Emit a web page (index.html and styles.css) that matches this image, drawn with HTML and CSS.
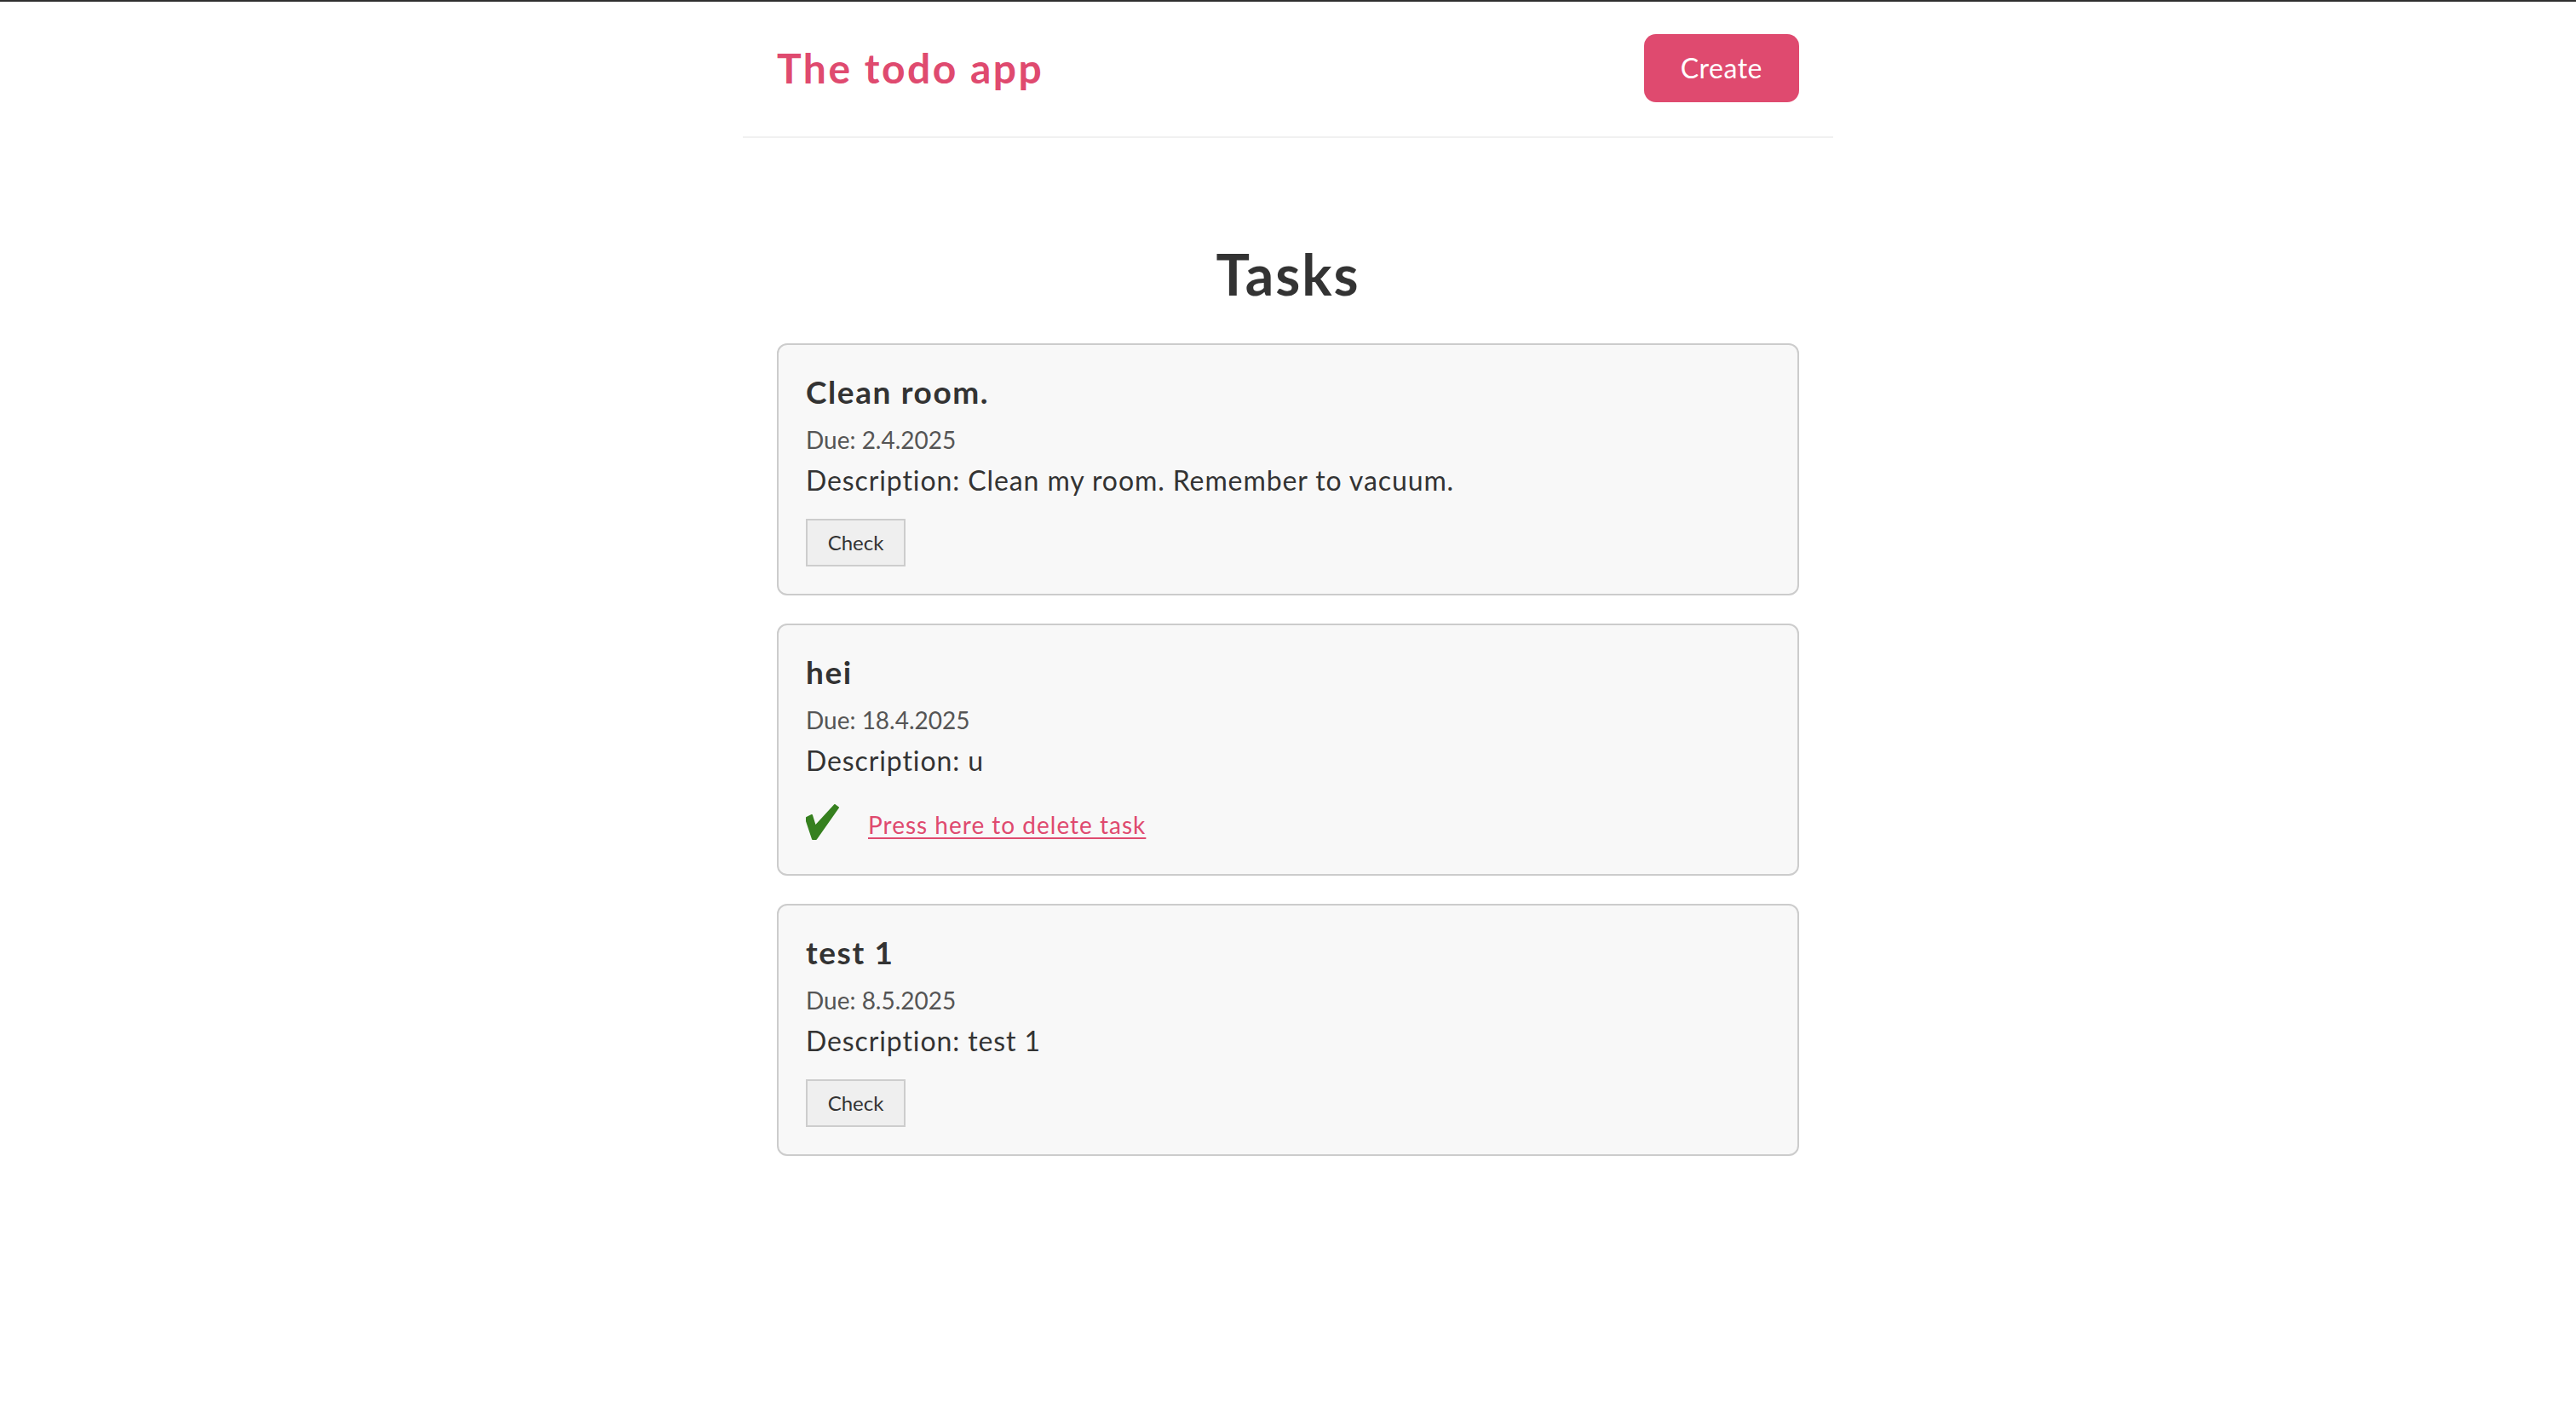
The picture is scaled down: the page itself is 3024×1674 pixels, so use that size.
FILE: index.html
```html
<!DOCTYPE html>
<html lang="en">
<head>
<meta charset="utf-8">
<title>The todo app</title>
<link rel="stylesheet" href="styles.css">
</head>
<body>
<header class="topbar">
  <h1 class="brand">The todo app</h1>
  <button class="create-btn" type="button">Create</button>
</header>
<main class="content">
  <h2 class="page-title">Tasks</h2>
  <ul class="task-list">
    <li class="task-card">
      <h3 class="task-title">Clean room.</h3>
      <p class="task-due">Due: 2.4.2025</p>
      <p class="task-desc">Description: Clean my room. Remember to vacuum.</p>
      <div class="task-actions">
        <button class="check-btn" type="button">Check</button>
      </div>
    </li>
    <li class="task-card">
      <h3 class="task-title">hei</h3>
      <p class="task-due">Due: 18.4.2025</p>
      <p class="task-desc">Description: u</p>
      <div class="task-actions task-actions--done">
        <svg class="done-mark" width="40" height="42" viewBox="0 0 40 42" aria-hidden="true">
          <polygon points="1,16 7,13 11,26 34,1 38,4 12,41 8,41 1,20" fill="#36801f" stroke="#36801f" stroke-width="2" stroke-linejoin="round"/>
        </svg>
        <a class="delete-link" href="#">Press here to delete task</a>
      </div>
    </li>
    <li class="task-card">
      <h3 class="task-title">test 1</h3>
      <p class="task-due">Due: 8.5.2025</p>
      <p class="task-desc">Description: test 1</p>
      <div class="task-actions">
        <button class="check-btn" type="button">Check</button>
      </div>
    </li>
  </ul>
</main>
</body>
</html>
```
FILE: styles.css
```css
html, body {
  margin: 0;
  padding: 0;
}

body {
  min-height: 100vh;
  background: #ffffff;
  box-shadow: inset 0 2px 0 #2f2f2f;
  font-family: "Lato", "Noto Sans", sans-serif;
  color: #333333;
}

.topbar {
  width: 1280px;
  box-sizing: border-box;
  margin: 0 auto;
  padding: 40px 40px;
  display: flex;
  align-items: center;
  justify-content: space-between;
  border-bottom: 2px solid #f1f1f1;
}

.brand {
  margin: 0;
  font-size: 48px;
  line-height: 60px;
  font-weight: 700;
  color: #df4a6f;
  letter-spacing: 2.5px;
}

.create-btn {
  height: 80px;
  padding: 0 43px;
  border: none;
  border-radius: 14px;
  background: #df4a6f;
  color: #ffffff;
  font-family: "Lato", "Noto Sans", sans-serif;
  font-size: 32px;
  line-height: 80px;
  letter-spacing: 0.5px;
}

.content {
  width: 1200px;
  margin: 0 auto;
}

.page-title {
  margin: 122px 0 43px;
  text-align: center;
  font-size: 66px;
  line-height: 76px;
  font-weight: 700;
  color: #333333;
  letter-spacing: 2px;
}

.task-list {
  list-style: none;
  margin: 0;
  padding: 0;
  display: flex;
  flex-direction: column;
  gap: 33px;
}

.task-card {
  box-sizing: border-box;
  height: 296px;
  padding: 32px;
  border: 2px solid #cccccc;
  border-radius: 12px;
  background: #f8f8f8;
  display: flex;
  flex-direction: column;
}

.task-title {
  margin: 1px 0 0;
  font-size: 37px;
  line-height: 44px;
  font-weight: 700;
  color: #333333;
  letter-spacing: 1.6px;
}

.task-due {
  margin: 16px 0 0;
  font-size: 28px;
  line-height: 36px;
  color: #555555;
}

.task-desc {
  margin: 10px 0 0;
  font-size: 32px;
  line-height: 40px;
  color: #333333;
  letter-spacing: 0.9px;
}

.task-actions {
  margin-top: 25px;
  display: flex;
  align-items: flex-start;
}

.check-btn {
  box-sizing: border-box;
  width: 117px;
  height: 56px;
  padding: 0;
  border: 2px solid #cdcdcd;
  border-radius: 0;
  background: #efefef;
  color: #333333;
  font-family: "Lato", "Noto Sans", sans-serif;
  font-size: 24px;
  line-height: 52px;
}

.task-actions--done {
  gap: 33px;
}

.done-mark {
  display: block;
  margin-top: 6px;
  flex: none;
}

.delete-link {
  margin-top: 12px;
  font-size: 28px;
  line-height: 36px;
  color: #df4a6f;
  text-decoration: underline;
  text-decoration-thickness: 2px;
  text-underline-offset: 4px;
  letter-spacing: 1px;
}
```
